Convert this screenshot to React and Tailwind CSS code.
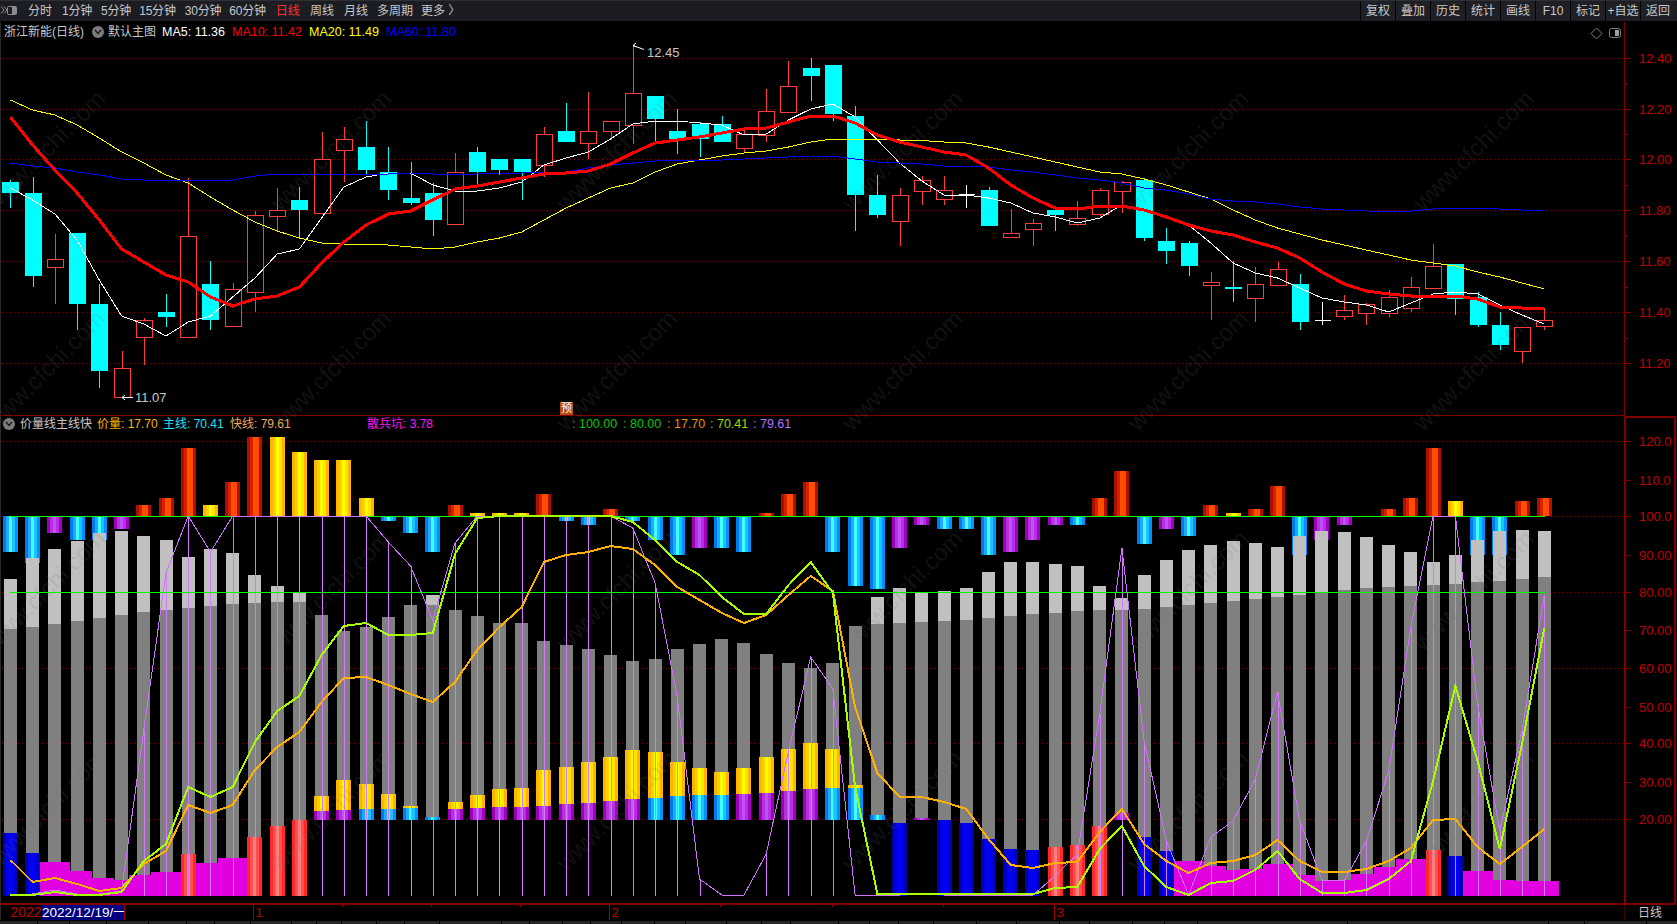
import React from "react";

// candle pixel data: [wick top, body top, body bottom, wick bottom, type]  c=cyan r=red w=white cross
const candles = [
  [180, 182, 193, 208, "c"], [177, 193, 276, 287, "c"], [234, 259, 267, 304, "r"], [233, 233, 304, 330, "c"], [284, 304, 371, 388, "c"],
  [351, 368, 397, 397, "r"], [318, 320, 337, 365, "r"], [294, 312, 317, 327, "c"], [178, 236, 337, 337, "r"], [261, 284, 320, 330, "c"],
  [283, 289, 326, 326, "r"], [211, 215, 292, 312, "r"], [188, 210, 216, 232, "r"], [187, 200, 210, 238, "c"], [132, 159, 213, 213, "r"],
  [127, 139, 150, 182, "r"], [121, 147, 170, 175, "c"], [147, 172, 190, 200, "c"], [162, 198, 203, 205, "c"], [183, 193, 220, 236, "c"],
  [153, 172, 224, 224, "r"], [147, 152, 172, 185, "c"], [159, 159, 170, 175, "c"], [159, 159, 172, 200, "c"], [127, 134, 165, 177, "r"],
  [103, 131, 142, 142, "c"], [92, 131, 143, 159, "r"], [121, 121, 131, 140, "r"], [45, 93, 125, 144, "r"], [96, 96, 119, 142, "c"],
  [109, 131, 139, 154, "c"], [122, 124, 139, 157, "c"], [116, 124, 142, 142, "c"], [130, 134, 148, 153, "r"], [89, 111, 135, 142, "r"],
  [61, 86, 112, 113, "r"], [58, 68, 76, 101, "c"], [65, 65, 114, 121, "c"], [106, 116, 195, 231, "c"], [175, 195, 215, 218, "c"],
  [188, 195, 221, 246, "r"], [176, 180, 191, 205, "r"], [176, 190, 199, 205, "r"], [185, 194, 194, 208, "w"], [187, 190, 226, 226, "c"],
  [209, 233, 237, 238, "r"], [219, 223, 229, 246, "r"], [210, 210, 215, 231, "c"], [201, 218, 224, 226, "r"], [188, 190, 214, 216, "r"],
  [181, 182, 191, 213, "r"], [178, 180, 238, 241, "c"], [228, 241, 251, 264, "c"], [241, 243, 266, 276, "c"], [272, 282, 285, 320, "r"],
  [261, 287, 289, 302, "c"], [267, 284, 298, 322, "r"], [262, 269, 285, 285, "r"], [274, 284, 322, 330, "c"], [302, 320, 320, 325, "w"],
  [295, 310, 316, 320, "r"], [303, 304, 313, 325, "r"], [290, 297, 313, 317, "r"], [277, 287, 308, 312, "r"], [244, 266, 288, 288, "r"],
  [264, 264, 299, 315, "c"], [292, 297, 325, 327, "c"], [312, 325, 345, 350, "c"], [327, 327, 351, 363, "r"], [308, 320, 326, 330, "r"],
];

const ma5 = [188, 200, 214, 240, 280, 316, 324, 336, 322, 316, 297, 278, 254, 249, 218, 187, 177, 173, 173, 185, 191, 191, 188, 182, 165,
  158, 152, 139, 124, 121, 121, 123, 125, 135, 134, 120, 109, 104, 117, 140, 163, 181, 195, 195, 198, 203, 213, 217, 223, 218,
  205, 209, 217, 225, 243, 263, 273, 278, 288, 298, 302, 305, 312, 303, 294, 292, 294, 305, 315, 324];
const ma10 = [117, 145, 170, 193, 220, 249, 262, 275, 282, 297, 306, 299, 296, 287, 263, 242, 225, 214, 211, 200, 189, 186, 182, 178, 174,
  173, 171, 164, 153, 143, 140, 137, 133, 129, 128, 122, 116, 116, 123, 135, 142, 147, 152, 155, 168, 185, 198, 208, 209, 206,
  206, 210, 217, 225, 231, 235, 242, 248, 258, 272, 284, 291, 294, 296, 296, 296, 299, 307, 308, 308];
const ma20 = [100, 110, 115, 125, 138, 152, 163, 175, 183, 197, 210, 222, 231, 238, 243, 244, 244, 245, 247, 249, 247, 242, 238, 232, 220,
  208, 198, 188, 183, 172, 164, 160, 156, 153, 151, 147, 142, 139, 139, 139, 140, 140.5, 142, 143, 147, 152, 157, 162, 167, 172,
  174, 179, 185, 192, 199, 210, 220, 228, 234, 240, 245, 250, 255, 260, 263, 266, 272, 277, 283, 289];
const ma60 = [163, 166, 168, 172, 175, 179, 180, 181, 180, 180, 180, 176, 174, 174, 174, 174, 174, 174, 173, 174, 174, 174, 173, 173, 172,
  172, 168, 165, 163, 161, 160, 160, 160, 159, 158, 157, 156, 156, 159, 162, 163, 164, 166, 166, 167, 170, 172, 175, 178, 180,
  183, 188, 190, 194, 199, 201, 202, 204, 207, 209, 210, 211, 212, 211, 209, 208, 208, 209, 210, 210];

// lower pane: upper bars around the 100 line. [kind, end y]
const upper = [
  ["c", 552], ["c", 563], ["p", 533], ["c", 540], ["c", 540], ["p", 529], ["r", 505], ["r", 498], ["r", 448], ["y", 505],
  ["r", 482], ["r", 437], ["y", 437], ["y", 452], ["y", 460], ["y", 460], ["y", 498], ["c", 521], ["c", 533], ["c", 552],
  ["r", 505], ["y", 513], ["y", 513], ["y", 513], ["r", 494], ["c", 521], ["c", 525], ["r", 509], ["c", 521], ["c", 540],
  ["c", 555], ["p", 548], ["c", 548], ["c", 552], ["r", 513], ["r", 494], ["r", 482], ["c", 552], ["c", 586], ["c", 589],
  ["p", 548], ["p", 525], ["c", 529], ["c", 529], ["c", 555], ["p", 552], ["p", 540], ["p", 525], ["c", 525], ["r", 498],
  ["r", 471], ["c", 544], ["p", 529], ["c", 536], ["r", 505], ["y", 513], ["r", 509], ["r", 486], ["c", 555], ["p", 540],
  ["p", 525], null, ["r", 509], ["r", 498], ["r", 448], ["y", 501], ["c", 555], ["c", 555], ["r", 501], ["r", 498],
];

// gray columns: [light top, dark top]; light top null means dark only
const gray = [
  [579, 629], [558, 627], [549, 624], [541, 621], [533, 618], [531, 615], [536, 612], [540, 610], [557, 608], [549, 606],
  [553, 604], [575, 603], [586, 602], [593, 602], [null, 615], [null, 631], [null, 627], [null, 617], [null, 605], [595, 605],
  [null, 610], [null, 616], [null, 623], [null, 623], [null, 641], [null, 645], [null, 649], [null, 655], [null, 661], [null, 659],
  [null, 649], [null, 644], [null, 639], [null, 643], [null, 654], [null, 663], [null, 668], [null, 663], [null, 626], [597, 624],
  [588, 623], [593, 622], [591, 621], [588, 620], [572, 618], [562, 616], [562, 614], [564, 613], [566, 611], [586, 610],
  [598, 610], [575, 609], [560, 607], [550, 605], [545, 603], [541, 601], [543, 599], [547, 597], [536, 595], [531, 593],
  [532, 590], [537, 588], [545, 587], [552, 586], [562, 585], [555, 584], [540, 582], [531, 581], [530, 579], [531, 577],
];

// stacks sitting on the 20 line: [yellow top, seam, lower kind]
const stacks = {
  14: [796, 811, "p"], 15: [780, 810, "p"], 16: [784, 809, "c"], 17: [794, 809, "c"], 18: [806, 808, "c"], 19: [817, 817, "c"],
  20: [802, 809, "p"], 21: [795, 808, "p"], 22: [789, 807, "p"], 23: [788, 807, "p"], 24: [770, 806, "p"], 25: [767, 804, "p"],
  26: [762, 803, "p"], 27: [757, 801, "p"], 28: [750, 799, "p"], 29: [752, 798, "c"], 30: [762, 796, "c"], 31: [768, 795, "c"],
  32: [772, 795, "c"], 33: [768, 794, "p"], 34: [757, 793, "p"], 35: [749, 791, "p"], 36: [743, 789, "p"], 37: [749, 788, "c"],
  38: [785, 788, "c"], 39: [815, 815, "c"], 41: [818, 818, "p"], 50: [813, 813, "p"],
};

// base columns down to the floor: b=blue, k=pink, m=magenta
const base = [
  ["b", 833], ["b", 853], ["m", 862], ["m", 871], ["m", 878], ["m", 880], ["m", 875], ["m", 872], ["k", 854], ["m", 863],
  ["m", 858], ["k", 837], ["k", 826], ["k", 820], null, null, null, null, null, null,
  null, null, null, null, null, null, null, null, null, null,
  null, null, null, null, null, null, null, null, null, null,
  ["b", 823], null, ["b", 820], ["b", 823], ["b", 839], ["b", 849], ["b", 850], ["k", 847], ["k", 845], ["k", 826],
  null, ["b", 837], ["b", 851], ["m", 861], ["m", 866], ["m", 870], ["m", 869], ["m", 864], ["m", 875], ["m", 881],
  ["m", 880], ["m", 874], ["m", 867], ["m", 859], ["k", 850], ["b", 856], ["m", 871], ["m", 880], ["m", 881], ["m", 881],
];

const fast = [894, 894, 890, 894, 894, 891, 730, 573, 516, 552, 516, 516, 516, 516, 516, 516, 516, 542, 566, 620,
  543, 516, 516, 516, 516, 516, 516, 516, 528, 583, 697, 879, 895, 895, 854, 751, 657, 689, 895, 895,
  895, 894, 895, 895, 895, 895, 895, 876, 854, 714, 548, 741, 841, 895, 837, 821, 779, 692, 821, 880,
  881, 841, 771, 627, 516, 516, 704, 831, 731, 595];
const main = [895, 895, 892, 895, 895, 892, 861, 844, 787, 797, 787, 742, 711, 696, 655, 626, 623, 635, 635, 633,
  554, 518, 516, 516, 516, 516, 516, 516, 522, 540, 562, 575, 597, 614, 614, 585, 562, 593, 787, 894,
  894, 894, 894, 894, 894, 894, 894, 888, 887, 849, 826, 866, 887, 895, 883, 881, 870, 851, 879, 893,
  893, 890, 879, 861, 781, 686, 761, 849, 744, 628];
const price = [860, 882, 878, 884, 891, 888, 864, 851, 805, 813, 805, 770, 747, 732, 702, 678, 677, 685, 694, 702,
  682, 650, 627, 607, 562, 555, 552, 546, 549, 565, 587, 600, 613, 623, 615, 595, 576, 591, 707, 773,
  797, 797, 802, 809, 839, 865, 868, 863, 862, 832, 809, 844, 861, 873, 863, 861, 855, 840, 861, 872,
  872, 869, 861, 848, 820, 819, 847, 864, 847, 829];

const stripes = {
  r: ["#a81000", "#d82000", "#ff5000", "#ff4c00", "#b01000"],
  y: ["#ffb400", "#ffd000", "#ffff00", "#ffe400", "#ffb400"],
  c: ["#0078f0", "#20a8ff", "#40ffff", "#20c0ff", "#0090ff"],
  p: ["#9c00b8", "#b430d8", "#c050ff", "#b430e0", "#a400c4"],
  k: ["#ff2828", "#ff5050", "#ff8080", "#ff5050", "#ff2828"],
  b: ["#0000b0", "#0000e4", "#0000ff", "#0000e4", "#0000b0"],
};

const X = (i) => 10.4 + 22.23 * i;
const pts = (ys) => ys.map((y, i) => `${X(i).toFixed(1)},${y}`).join(" ");
const gridPrice = [58.5, 109.5, 159.5, 210.5, 261.5, 312.5, 363.5];
const gridLower = [441.5, 516.5, 592.5, 668.5, 743.5, 819.5];
const priceLabels = [["12.40", 58.5], ["12.20", 109.5], ["12.00", 159.5], ["11.80", 210.5], ["11.60", 261.5], ["11.40", 312.5], ["11.20", 363.5]];
const lowerLabels = [["120.0", 441], ["110.0", 480], ["100.0", 516], ["90.00", 555], ["80.00", 592], ["70.00", 630], ["60.00", 668], ["50.00", 707], ["40.00", 743], ["30.00", 782], ["20.00", 819]];
const chartFont = "'Liberation Sans','Noto Sans CJK SC',sans-serif";

function Striped({ i, y1, y2, kind }) {
  const left = Math.round(X(i) - 7.5);
  return stripes[kind].map((c, n) => (
    <rect key={n} x={left + n * 3} y={y1} width="3" height={Math.max(y2 - y1, 0)} fill={c} />
  ));
}

function Candle({ i, d }) {
  const [wt, bt, bb, wb, type] = d;
  const cx = Math.round(X(i)) + 0.5;
  if (type === "w") {
    return (
      <g stroke="#ffffff">
        <line x1={cx} x2={cx} y1={wt} y2={wb} />
        <line x1={cx - 8} x2={cx + 8} y1={bt + 0.5} y2={bt + 0.5} />
      </g>
    );
  }
  const color = type === "c" ? "#00ffff" : "#ff3c3c";
  return (
    <g stroke={color}>
      <line x1={cx} x2={cx} y1={wt} y2={bt} />
      <line x1={cx} x2={cx} y1={bb} y2={wb} />
      {type === "c" ? (
        <rect x={cx - 8.5} y={bt} width="17" height={bb - bt} fill={color} stroke="none" />
      ) : (
        <rect x={cx - 8} y={bt + 0.5} width="16" height={bb - bt} fill="#000000" />
      )}
    </g>
  );
}

function PricePane() {
  return (
    <g>
      <g shapeRendering="crispEdges">
        {gridPrice.map((y) => (
          <line key={y} x1="2" x2="1624" y1={y} y2={y} stroke="#780000" strokeDasharray="1 3" />
        ))}
        {candles.map((d, i) => (
          <Candle key={i} i={i} d={d} />
        ))}
        <polyline points={pts(ma5)} fill="none" stroke="#ffffff" strokeWidth="1" />
        <polyline points={pts(ma20)} fill="none" stroke="#ffff00" strokeWidth="1" />
        <polyline points={pts(ma60)} fill="none" stroke="#0000ff" strokeWidth="1" />
        <polyline points={pts(ma10)} fill="none" stroke="#ff0000" strokeWidth="3" />
      </g>
      <path d="M644 49.5 L633 45.5 M633 45.5 l3 -2.5 M633 45.5 l3.5 1.5" stroke="#ffffff" fill="none" />
      <path d="M133 397.5 H122 M122 397.5 l3 -2.5 M122 397.5 l3 2.5" stroke="#ffffff" fill="none" />
      <text x="647" y="56.5" fontSize="13" fill="#c8c8c8" fontFamily={chartFont}>12.45</text>
      <text x="135" y="401.5" fontSize="13" fill="#c8c8c8" fontFamily={chartFont}>11.07</text>
    </g>
  );
}

function LowerPane() {
  return (
    <g>
      <g shapeRendering="crispEdges">
        {gridLower.map((y) => (
          <line key={y} x1="2" x2="1624" y1={y} y2={y} stroke="#780000" strokeDasharray="1 3" />
        ))}
        {upper.map((u, i) =>
          u ? <Striped key={i} i={i} kind={u[0]} y1={Math.min(u[1], 516)} y2={Math.max(u[1], 516)} /> : null
        )}
        {gray.map(([light, dark], i) => {
          const left = Math.round(X(i) - 6.5);
          const b = base[i];
          const bottom = b ? b[1] : 820;
          return (
            <g key={i}>
              {light && <rect x={left} y={light} width="13" height={dark - light} fill="#c0c0c0" />}
              <rect x={left} y={dark} width="13" height={bottom - dark} fill="#808080" />
            </g>
          );
        })}
        {Object.entries(stacks).map(([k, [top, seam, kind]]) => {
          const i = Number(k);
          return (
            <g key={k}>
              <Striped i={i} kind="y" y1={top} y2={seam} />
              <Striped i={i} kind={kind} y1={seam} y2={820} />
            </g>
          );
        })}
        {base.map((b, i) =>
          b && b[0] === "m" ? (
            <rect key={i} x={Math.round(X(i) - 15)} y={b[1]} width="30" height={896 - b[1]} fill="#e000e0" />
          ) : null
        )}
        {base.map((b, i) =>
          b && b[0] !== "m" ? <Striped key={i} i={i} kind={b[0]} y1={b[1]} y2={896} /> : null
        )}
        {fast.map((y, i) =>
          y < 893 && i > 5 ? (
            <line key={i} x1={Math.round(X(i)) + 0.5} x2={Math.round(X(i)) + 0.5} y1={y} y2="896" stroke="#d878ff" />
          ) : null
        )}
        <line x1="10" x2="1545" y1="516.5" y2="516.5" stroke="#00ff00" />
        <line x1="10" x2="1545" y1="592.5" y2="592.5" stroke="#00ff00" />
        <polyline points={pts(fast)} fill="none" stroke="#d070ff" strokeWidth="1" />
        <polyline points={pts(price)} fill="none" stroke="#ffb000" strokeWidth="2" />
        <polyline points={pts(main)} fill="none" stroke="#a8ff00" strokeWidth="2" />
      </g>
    </g>
  );
}

function Axis() {
  return (
    <g fontFamily={chartFont}>
      <g shapeRendering="crispEdges" stroke="#800000">
        <line x1="1624.5" x2="1624.5" y1="22" y2="416" />
        <rect x="1624.5" y="416.5" width="50" height="487" fill="none" strokeWidth="2" />
        <line x1="0" x2="1624" y1="415.5" y2="415.5" />
        <line x1="0" x2="1624" y1="904" y2="904" strokeWidth="2" />
        {priceLabels.map(([, y]) => (
          <line key={y} x1="1624" x2="1631" y1={y} y2={y} />
        ))}
        {[84, 134, 185, 236, 287, 338].map((y) => (
          <line key={y} x1="1624" x2="1628" y1={y + 0.5} y2={y + 0.5} />
        ))}
        {lowerLabels.map(([, y]) => (
          <line key={y} x1="1625" x2="1631" y1={y + 0.5} y2={y + 0.5} />
        ))}
      </g>
      {priceLabels.map(([t, y]) => (
        <text key={t} x="1639" y={y + 4.5} fontSize="13" fill="#c00000">{t}</text>
      ))}
      {lowerLabels.map(([t, y]) => (
        <text key={t} x="1639" y={y + 4.5} fontSize="13" fill="#c00000">{t}</text>
      ))}
      <path d="M1596.5 28 L1602 33.5 L1596.5 39 L1591 33.5 Z" fill="none" stroke="#808080" />
      <rect x="1609.5" y="28.5" width="11" height="9" rx="2" fill="none" stroke="#808080" />
      <rect x="1615" y="30" width="4" height="6" fill="#a0a0a0" />
    </g>
  );
}

function DateTicks() {
  return (
    <g fontFamily={chartFont}>
      <g shapeRendering="crispEdges" stroke="#a00000">
        {[253.5, 609.5, 1054.5].map((x) => (
          <line key={x} x1={x} x2={x} y1="905" y2="920" />
        ))}
        {[342.5, 431.5, 520.5, 720.5, 832.5, 943.5].map((x) => (
          <line key={x} x1={x} x2={x} y1="905" y2="907" />
        ))}
        <line x1="1624.5" x2="1624.5" y1="905" y2="920" stroke="#400000" />
      </g>
      <text x="255.5" y="917" fontSize="13" fill="#c00000">1</text>
      <text x="611.5" y="917" fontSize="13" fill="#c00000">2</text>
      <text x="1056.5" y="917" fontSize="13" fill="#c00000">3</text>
      <text x="10.5" y="917" fontSize="14" fill="#c00000">2022</text>
      <text x="1638" y="917" fontSize="12" fill="#c8c8c8">日线</text>
    </g>
  );
}

function Watermarks() {
  const marks = [];
  for (let k = 0; k < 6; k++) {
    for (let m = 0; m < 4; m++) {
      marks.push([107 + 285.7 * k, 100 + 220 * m]);
    }
  }
  return (
    <g fontFamily="'Liberation Sans',sans-serif" fontSize="24" fill="#707070" fillOpacity="0.17">
      {marks.map(([x, y]) => (
        <text key={`${x}-${y}`} x={x} y={y} textAnchor="end" transform={`rotate(-45 ${x} ${y})`}>www.cfchi.com</text>
      ))}
    </g>
  );
}

function PanelIcon() {
  return (
    <svg width="18" height="12" viewBox="0 0 18 12" fill="none" stroke="#8c8c8c">
      <path d="M1 1.5 L4 5 L1 8.5 M4 1.5 L7 5 L4 8.5" />
      <rect x="7.5" y="1.5" width="9" height="8" rx="1" />
      <rect x="12" y="2" width="4" height="7" fill="#8c8c8c" stroke="none" />
    </svg>
  );
}

function ChevronDot({ className }) {
  return (
    <span className={`flex items-center justify-center w-3 h-3 rounded-full bg-[#7c7c7c] ${className}`}>
      <svg width="8" height="6" viewBox="0 0 8 6" fill="none" stroke="#1a1a1a" strokeWidth="1.4">
        <path d="M1 1 L4 4.5 L7 1" />
      </svg>
    </span>
  );
}

const periods = [
  ["分时", "ml-[10px]"], ["1分钟", "ml-[10px] tracking-[-0.2px]"], ["5分钟", "ml-[9px] tracking-[-0.2px]"], ["15分钟", "ml-[8px] tracking-[-0.2px]"], ["30分钟", "ml-[9px] tracking-[-0.2px]"],
  ["60分钟", "ml-[8px] tracking-[-0.2px]"], ["日线", "ml-[10px] text-[#ff3030]"], ["周线", "ml-[10px]"], ["月线", "ml-[10px]"], ["多周期", "ml-[9px]"], ["更多 〉", "ml-[8px]"],
];
const actions = ["复权", "叠加", "历史", "统计", "画线", "F10", "标记", "+自选", "返回"];
const footCells = [37, 31, 36, 41, 37, 27, 35, 40, 24, 24, 34, 27, 35, 61, 27, 32, 27, 30, 32, 30, 40, 34, 28, 47, 30, 28, 34, 42, 39, 42, 29, 42, 31, 32, 150, 200, 35, 61, 30];

export default function App() {
  return (
    <div className="w-[1677px] h-[924px] bg-black flex flex-col overflow-hidden font-['Liberation_Sans','Noto_Sans_CJK_SC',sans-serif] text-[12px] text-[#c8c8c8]">
      <div className="h-[22px] shrink-0 border-t border-[#2e3036] border-b border-b-black bg-[#1c1d22] flex items-center justify-between pr-[2px]">
        <div className="flex items-center">
          <PanelIcon />
          {periods.map(([label, cls]) => (
            <span key={label} className={`whitespace-nowrap text-[12px] ${cls}`}>{label}</span>
          ))}
        </div>
        <div className="flex h-full">
          {actions.map((a) => (
            <span key={a} className="w-[35px] flex items-center justify-center border-l border-black bg-[#1f2025] whitespace-nowrap">{a}</span>
          ))}
        </div>
      </div>

      <div className="relative h-[898px] shrink-0">
        <svg width="1677" height="898" viewBox="0 22 1677 898" className="block">
          <rect x="0" y="22" width="1" height="898" fill="#2a2a2a" />
          <PricePane />
          <LowerPane />
          <Axis />
          <DateTicks />
          <Watermarks />
        </svg>

        <div className="absolute left-[4px] top-[1px] h-[18px] flex items-center whitespace-nowrap">
          <span className="w-[84px]">浙江新能(日线)</span>
          <ChevronDot className="ml-[4px]" />
          <span className="ml-[4px] w-[54px]">默认主图</span>
          <span className="text-white w-[70px] text-[12.5px]">MA5: 11.36</span>
          <span className="text-[#ff0000] w-[77px] text-[12.5px]">MA10: 11.42</span>
          <span className="text-[#ffff00] w-[77px] text-[12.5px]">MA20: 11.49</span>
          <span className="text-[#0000ff] text-[12.5px]">MA60: 11.80</span>
        </div>

        <div className="absolute left-[3px] top-[393px] h-[18px] flex items-center whitespace-nowrap">
          <ChevronDot />
          <span className="ml-[5px] w-[77px]">价量线主线快</span>
          <span className="text-[#ffb000] w-[66px]">价量: 17.70</span>
          <span className="text-[#20e0ff] w-[67px]">主线: 70.41</span>
          <span className="text-[#e8a860] w-[137px]">快线: 79.61</span>
          <span className="text-[#ff10ff]">散兵坑: 3.78</span>
        </div>
        <div className="absolute left-[572px] top-[393px] h-[18px] flex items-center whitespace-nowrap text-[12.5px]">
          <span className="text-[#00c800] w-[51px]">: 100.00</span>
          <span className="text-[#00c800] w-[44px]">: 80.00</span>
          <span className="text-[#e89000] w-[43px]">: 17.70</span>
          <span className="text-[#a0d800] w-[43px]">: 70.41</span>
          <span className="text-[#b070ff]">: 79.61</span>
        </div>

        <span className="absolute left-[560px] top-[380px] w-[13px] h-[13px] bg-[#b84a10] text-white text-[11px] leading-[13px] text-center">预</span>
        <span className="absolute left-[42px] top-[883px] w-[83px] h-[15px] bg-[#000080] border-r border-[#a00000] text-white text-[13.5px] leading-[15px] whitespace-nowrap overflow-hidden">2022/12/19/一</span>
      </div>

      <div className="flex-1 flex gap-px bg-black pt-px">
        {footCells.map((w, n) => (
          <div key={n} className="bg-[#262626] h-full" style={{ width: w }} />
        ))}
      </div>
    </div>
  );
}
